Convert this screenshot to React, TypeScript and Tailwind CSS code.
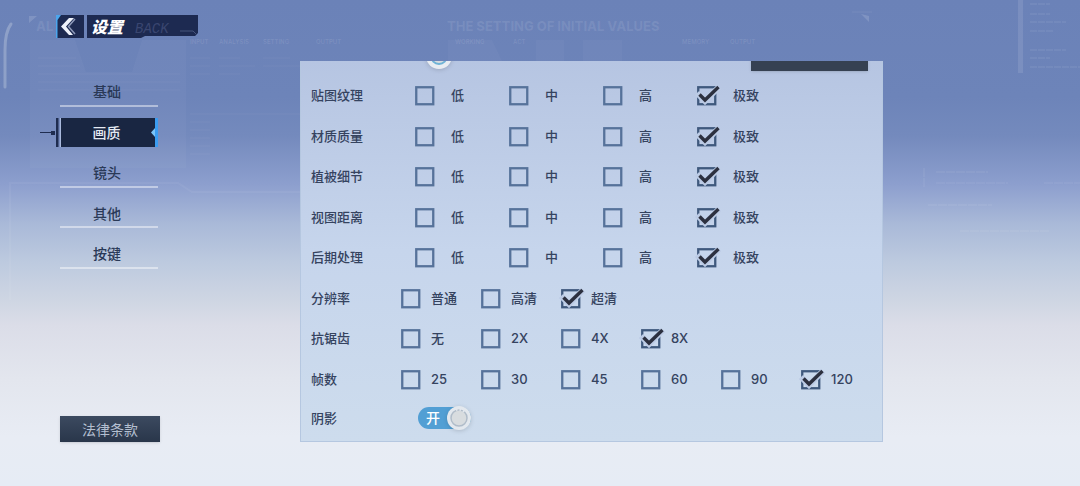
import { useState } from "react";

type Setting = {
  id: string;
  label: string;
  options: string[];
  value: string;
};

const quality = ["低", "中", "高", "极致"];

const levels: Setting[] = [
  { id: "texture", label: "贴图纹理", options: quality, value: "极致" },
  { id: "material", label: "材质质量", options: quality, value: "极致" },
  { id: "foliage", label: "植被细节", options: quality, value: "极致" },
  { id: "distance", label: "视图距离", options: quality, value: "极致" },
  { id: "post", label: "后期处理", options: quality, value: "极致" },
  { id: "resolution", label: "分辨率", options: ["普通", "高清", "超清"], value: "超清" },
  { id: "aa", label: "抗锯齿", options: ["无", "2X", "4X", "8X"], value: "8X" },
  { id: "fps", label: "帧数", options: ["25", "30", "45", "60", "90", "120"], value: "120" },
];

const tabs = ["基础", "画质", "镜头", "其他", "按键"];

function Backdrop() {
  return (
    <svg
      aria-hidden="true"
      className="absolute left-0 top-0 pointer-events-none"
      width="1080"
      height="486"
      viewBox="0 0 1080 486"
      fill="#ffffff"
    >
      <text x="447" y="31" fontSize="13" fontWeight="800" fillOpacity="0.09">
        THE SETTING OF INITIAL VALUES
      </text>
      <text x="36" y="31" fontSize="13" fontWeight="800" fillOpacity="0.09">
        AL
      </text>
      <g fontSize="6" fillOpacity="0.11" fontWeight="600">
        <text x="190" y="44">INPUT</text>
        <text x="219" y="44">ANALYSIS</text>
        <text x="263" y="44">SETTING</text>
        <text x="316" y="44">OUTPUT</text>
        <text x="455" y="44">WORKING</text>
        <text x="513" y="44">ACT</text>
        <text x="682" y="44">MEMORY</text>
        <text x="730" y="44">OUTPUT</text>
      </g>
      {/* left sheet */}
      <path d="M30 40H75L86 72H132L142 40H186V168H30Z" fillOpacity="0.03" />
      <path d="M448 40H492L502 61H448ZM536 40H564V61H536ZM583 40H622V61H583Z" fillOpacity="0.03" />
      <path
        d="M38 58H76M38 66H80M38 74H180M38 82H180M38 90H180M190 58H210M219 58H240M263 58H290M190 66H210M219 66H255M263 66H300M190 74H210M219 74H240M190 114H300M190 122H210M190 130H210M190 138H210M190 146H210M190 154H210"
        stroke="#ffffff"
        strokeOpacity="0.05"
        fill="none"
      />
      {/* lower frame */}
      <path d="M10 300V183H178L192 192H300" stroke="#ffffff" strokeOpacity="0.05" strokeWidth="2" fill="none" />
      <path d="M861 14l8 8v-6ZM29 16h8l-8 7Z" fillOpacity="0.14" />
      <path d="M852 12H872" stroke="#ffffff" strokeOpacity="0.08" />
      {/* side rails */}
      <path
        d="M11 24Q5 32 5 50V87"
        stroke="#a5b4d2"
        strokeOpacity="0.6"
        strokeWidth="3"
        strokeLinecap="round"
        fill="none"
      />
      <path d="M1018 0h5v73h-5Z" fillOpacity="0.1" />
      <path
        d="M1030 4h20M1030 14h20M1030 22h36M1030 31h24M1030 50h36M1030 58h20M1030 67h50"
        stroke="#ffffff"
        strokeOpacity="0.06"
        strokeWidth="2"
        strokeDasharray="7 1"
      />
      <path
        d="M924 168v20M936 172h52M936 183h72M1044 183h36M928 205h64M960 231h90"
        stroke="#ffffff"
        strokeOpacity="0.05"
        strokeWidth="2"
        strokeDasharray="9 1"
      />
    </svg>
  );
}

function CheckBox({ checked }: { checked: boolean }) {
  return (
    <svg className="shrink-0 overflow-visible" width="20" height="20" viewBox="0 0 20 20" fill="none" aria-hidden="true">
      <rect x="1.25" y="1.25" width="17" height="17" stroke={checked ? "#3f597d" : "#56729a"} strokeWidth="2.3" />
      {checked && (
        <>
          <path d="M0 7L8 15L22 1" stroke="#bccbe5" strokeWidth="6" />
          <path d="M2.5 8.5L8 14L21.5 1" stroke="#2c303f" strokeWidth="3.4" />
        </>
      )}
    </svg>
  );
}

function SettingRow({ setting }: { setting: Setting }) {
  const [value, setValue] = useState(setting.value);
  const wide = setting.options === quality;

  return (
    <div role="radiogroup" aria-labelledby={setting.id} className="flex items-center">
      <span id={setting.id} className={`pb-0.5 ${wide ? "w-[104px]" : "w-[90px]"}`}>
        {setting.label}
      </span>
      {setting.options.map((option) => (
        <label
          key={option}
          className={`relative flex items-center cursor-pointer ${wide ? "w-[94px] gap-4" : "w-20 gap-2.5"}`}
        >
          <input
            type="radio"
            className="sr-only"
            name={setting.id}
            checked={value === option}
            onChange={() => setValue(option)}
          />
          <CheckBox checked={value === option} />
          <span className="pb-0.5 whitespace-nowrap">{option}</span>
        </label>
      ))}
    </div>
  );
}

function Toggle({ label }: { label: string }) {
  const [on, setOn] = useState(true);

  return (
    <button
      type="button"
      role="switch"
      aria-checked={on}
      aria-label={label}
      onClick={() => setOn(!on)}
      className={`flex items-center justify-between w-[53px] h-[22px] rounded-full pl-2 text-sm font-medium text-white ${
        on ? "bg-[#529fd4]" : "bg-slate-400"
      }`}
    >
      {on ? "开" : "关"}
      <svg className="shrink-0 drop-shadow-sm" width="24" height="24" viewBox="0 0 24 24" aria-hidden="true">
        <circle cx="12" cy="12" r="12" fill="#e3e8ee" />
        <circle cx="12" cy="12" r="8" fill="#d8dcdf" stroke="#b0bcc9" strokeWidth="1.5" />
        <path d="M9 4A8 8 0 0 1 18 7" stroke="#e3e8ee" strokeWidth="2" strokeDasharray="1.5 2" fill="none" />
      </svg>
    </button>
  );
}

export default function App() {
  const [tab, setTab] = useState("画质");

  return (
    <div className="relative min-h-screen flex overflow-hidden font-['Inter','Noto_Sans_CJK_SC',sans-serif] text-[13px] leading-5 text-[#35435f] bg-linear-[180deg,#6b82b8_0%,#6d84b9_20%,#748abd_28%,#8d9fce_38%,#a9b9d8_46%,#bdcadf_54%,#cfd6e3_62%,#dbdde8_67%,#e3e6ee_78%,#e8ecf4_90%,#e6ecf5_100%]">
      <Backdrop />

      <div className="relative w-[300px] shrink-0 flex flex-col items-start pt-[15px] pb-11 pl-[56px]">
        <header className="flex gap-[3px] h-[23px]">
          <button type="button" aria-label="返回" className="w-7 bg-[#1d2a51]">
            <svg width="28" height="23" viewBox="0 0 28 23" aria-hidden="true">
              <path d="M0 0H5L1.5 5V23H0Z" fill="#4ba6ee" />
              <path d="M13 3H18L10 11.5L17 20H13L5 11.5Z" fill="#eef2fb" />
              <path d="M19 4L12.5 11.5L19 19" stroke="#8c98b8" strokeWidth="1.5" fill="none" />
            </svg>
          </button>
          <div className="relative w-[111px]">
            <svg className="absolute inset-0" width="111" height="23" viewBox="0 0 111 23" aria-hidden="true">
              <path d="M0 0H111V18L108 21H58L54 23H0Z" fill="#1d2a51" />
              <path d="M93 16H106L110 20" stroke="#46547d" fill="none" />
            </svg>
            <div className="relative flex items-center gap-3 h-full pl-1 italic">
              <h1 className="text-base font-black text-white">设置</h1>
              <span className="pt-1 font-['Liberation_Mono',monospace] text-sm text-[#3a4670]">BACK</span>
            </div>
          </div>
        </header>

        <nav className="mt-7 ml-1 w-[98px] h-[203px] grid auto-rows-fr">
          {tabs.map((name) => {
            const active = name === tab;
            return (
              <div key={name} className="relative flex items-end">
                <button
                  type="button"
                  aria-current={active ? "page" : undefined}
                  onClick={() => setTab(name)}
                  className={`w-full h-[29px] pr-1 text-sm font-medium cursor-pointer ${
                    active
                      ? "bg-[#192642] text-[#e4e9f2] border-r-3 border-[#3b9cf0] pl-0.5"
                      : "pt-0.5 text-[#2a3957] border-b-2 border-white/45"
                  }`}
                >
                  {name}
                </button>
                {active && (
                  <svg className="absolute bottom-0 -left-5" width="118" height="29" viewBox="0 0 118 29" aria-hidden="true">
                    <path d="M0 14.5H12" stroke="#1f2d50" />
                    <path d="M11 13h4v4h-4ZM16 0h2.5v29H16Z" fill="#1f2d50" />
                    <path d="M20.5 0V29" stroke="#a9b9dc" />
                    <path d="M115 10L111 14.5L115 19Z" fill="#7cc4f7" />
                  </svg>
                )}
              </div>
            );
          })}
        </nav>

        <button
          type="button"
          className="mt-auto ml-1 w-[100px] h-[26px] pt-0.5 text-sm text-[#b4bfd0] bg-linear-to-b from-[#3c4a60] to-[#29364a] shadow-sm"
        >
          法律条款
        </button>
      </div>

      <main className="relative flex-1 mt-[61px] mb-11 mr-[197px] px-2.5 overflow-hidden border border-t-0 border-[#b5c7e0] bg-linear-to-b from-[#b6c5e2] via-[#c6d5ec] to-[#cddced] font-medium">
        <div className="flex items-end justify-between h-10 -mt-[30px] pl-[115px] pr-1">
          <svg className="mb-0.5 drop-shadow-sm" width="26" height="26" viewBox="0 0 26 26" aria-hidden="true">
            <circle cx="13" cy="13" r="13" fill="#e9edf2" />
            <circle cx="13" cy="13" r="8" fill="#d8dcdf" stroke="#6fb3d6" strokeWidth="2" />
          </svg>
          <button type="button" aria-label="恢复默认" className="w-[117px] h-[26px] bg-[#364152] shadow" />
        </div>

        <div className="mt-[5px] h-[324px] grid auto-rows-fr">
          {levels.map((setting) => (
            <SettingRow key={setting.id} setting={setting} />
          ))}
        </div>

        <div className="flex items-center h-9">
          <span className="w-[107px]">阴影</span>
          <Toggle label="阴影" />
        </div>
      </main>
    </div>
  );
}
